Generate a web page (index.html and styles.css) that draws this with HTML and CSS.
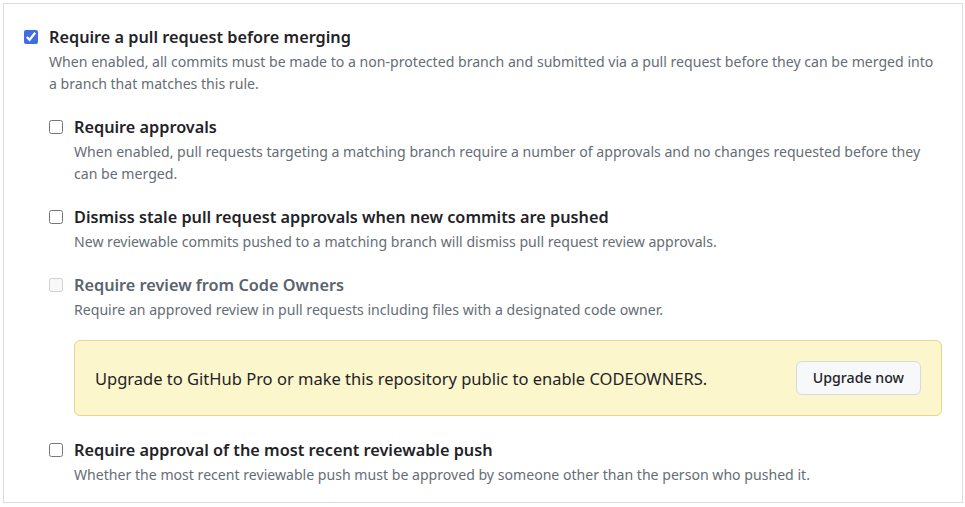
FILE: index.html
```html
<!DOCTYPE html>
<html lang="en">
<head>
<meta charset="utf-8">
<title>Branch protection</title>
<link rel="stylesheet" href="styles.css">
</head>
<body>
<div class="box">
  <div class="option">
    <input type="checkbox" class="check" checked>
    <div class="content">
      <div class="title">Require a pull request before merging</div>
      <div class="desc">When enabled, all commits must be made to a non-protected branch and submitted via a pull request before they can be merged into a branch that matches this rule.</div>
      <div class="sub-list">
        <div class="option">
          <input type="checkbox" class="check">
          <div class="content">
            <div class="title">Require approvals</div>
            <div class="desc">When enabled, pull requests targeting a matching branch require a number of approvals and no changes requested before they can be merged.</div>
          </div>
        </div>
        <div class="option">
          <input type="checkbox" class="check">
          <div class="content">
            <div class="title">Dismiss stale pull request approvals when new commits are pushed</div>
            <div class="desc">New reviewable commits pushed to a matching branch will dismiss pull request review approvals.</div>
          </div>
        </div>
        <div class="option">
          <input type="checkbox" class="check" disabled>
          <div class="content">
            <div class="title disabled">Require review from Code Owners</div>
            <div class="desc">Require an approved review in pull requests including files with a designated code owner.</div>
            <div class="flash">
              <span class="flash-text">Upgrade to GitHub Pro or make this repository public to enable CODEOWNERS.</span>
              <button class="btn" type="button">Upgrade now</button>
            </div>
          </div>
        </div>
        <div class="option last">
          <input type="checkbox" class="check">
          <div class="content">
            <div class="title">Require approval of the most recent reviewable push</div>
            <div class="desc">Whether the most recent reviewable push must be approved by someone other than the person who pushed it.</div>
          </div>
        </div>
      </div>
    </div>
  </div>
</div>
</body>
</html>
```
FILE: styles.css
```css
html, body {
  margin: 0;
  padding: 0;
  background: #ffffff;
}

body {
  font-family: "Noto Sans", "Open Sans", sans-serif;
  color: #1f2328;
}

.box {
  margin: 3px 2px 0 3px;
  height: 500px;
  box-sizing: border-box;
  border: 1px solid #d8dee4;
  padding: 21px 20px 18px 20px;
}

.option {
  display: grid;
  grid-template-columns: 15px 1fr;
  column-gap: 10px;
  align-items: start;
}

.check {
  width: 14px;
  height: 14px;
  margin: 5px 0 0 0;
  accent-color: #3f6ee3;
}

.title {
  font-size: 16.25px;
  font-weight: 600;
  line-height: 24px;
  color: #1f2328;
}

.title.disabled {
  color: #59636e;
}

.desc {
  margin-top: 2px;
  font-size: 14.1px;
  line-height: 22px;
  color: #656d76;
}

.sub-list {
  margin-top: 20px;
  display: flex;
  flex-direction: column;
  gap: 20px;
}

.sub-list .option.last {
  margin-top: 2px;
}

.flash {
  margin-top: 19px;
  display: flex;
  align-items: center;
  justify-content: space-between;
  background: #fbf6cb;
  border: 1px solid #e7d68d;
  border-radius: 6px;
  padding: 20px;
  min-height: 34px;
}

.flash-text {
  font-size: 16.5px;
  color: #1f2328;
}

.btn {
  font-family: inherit;
  font-size: 14.2px;
  font-weight: 500;
  color: #1f2328;
  background: #f6f8fa;
  border: 1px solid #d5dae0;
  border-radius: 6px;
  height: 34px;
  padding: 0 16px;
  line-height: 20px;
}
```
